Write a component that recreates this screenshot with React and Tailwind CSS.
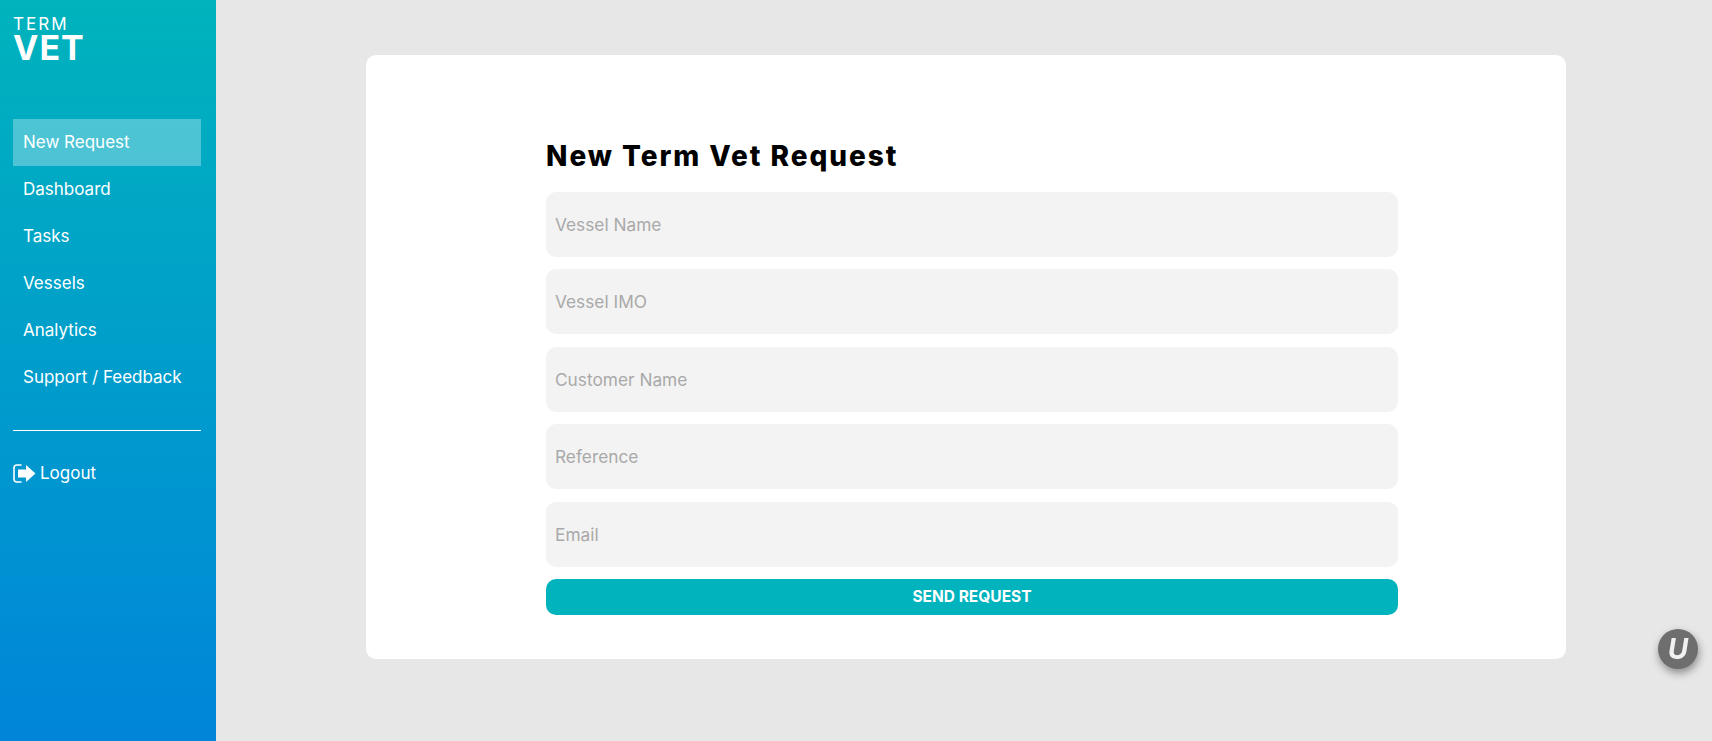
const navItems = ["New Request", "Dashboard", "Tasks", "Vessels", "Analytics", "Support / Feedback"];
const fields = ["Vessel Name", "Vessel IMO", "Customer Name", "Reference", "Email"];

function LogoutIcon() {
  return (
    <svg width="23" height="21" viewBox="0 0 23 21" fill="none">
      <path d="M8 2H4A3 3 0 0 0 1 5v11a3 3 0 0 0 3 3h4" stroke="white" strokeWidth="1.6" strokeLinecap="round" />
      <path d="M5 6.500h8V2l9.500 8.500L13 19v-4.500H5z" fill="white" />
    </svg>
  );
}

export default function App() {
  return (
    <div className="flex h-[741px] overflow-hidden bg-[#e7e7e7] font-['Inter','Liberation_Sans',sans-serif]">
      <aside className="w-[216px] shrink-0 bg-gradient-to-b from-[#00b3bc] to-[#0085d9] pl-[13px] pr-[15px] text-white">
        <div className="pt-[16px] h-[119px]">
          <div className="text-[17px] leading-[17px] tracking-[2px]">TERM</div>
          <div className="text-[34px] leading-[30px] font-bold tracking-[1px]">VET</div>
        </div>
        <nav className="flex flex-col">
          {navItems.map((item, i) => (
            <a key={item} className={`h-[47px] flex items-center pl-[10px] text-[17px] ${i === 0 ? "bg-white/30" : ""}`}>
              {item}
            </a>
          ))}
        </nav>
        <div className="mt-[29px] border-t border-white" />
        <a className="mt-[30px] flex items-center gap-[4px] text-[17px]">
          <LogoutIcon />
          Logout
        </a>
      </aside>

      <main className="flex-1 pt-[55px] pl-[150px]">
        <div className="w-[1200px] h-[604px] bg-white rounded-[10px] pt-[84px] pl-[180px] pr-[168px]">
          <h1 className="text-[28px] leading-[34px] font-extrabold tracking-[1.95px] text-black">New Term Vet Request</h1>
          <form className="mt-[19px] flex flex-col gap-[12.4px]">
            {fields.map((f) => (
              <input
                key={f}
                placeholder={f}
                className="h-[65px] w-full rounded-[10px] bg-[#f3f3f3] px-[9px] text-[17.3px] outline-none placeholder:text-[#a9a9a9]"
              />
            ))}
            <button type="button" className="h-[36px] rounded-[10px] bg-[#00b3bc] text-[15.5px] font-bold text-white">
              SEND REQUEST
            </button>
          </form>
        </div>
      </main>

      <div className="fixed left-[1658px] top-[629px] flex h-[40px] w-[40px] items-center justify-center rounded-full bg-[#6e6e6e] text-[28px] font-bold italic text-[#f0f0f0] shadow-[1px_4px_8px_rgba(0,0,0,0.4)]">
        U
      </div>
    </div>
  );
}
